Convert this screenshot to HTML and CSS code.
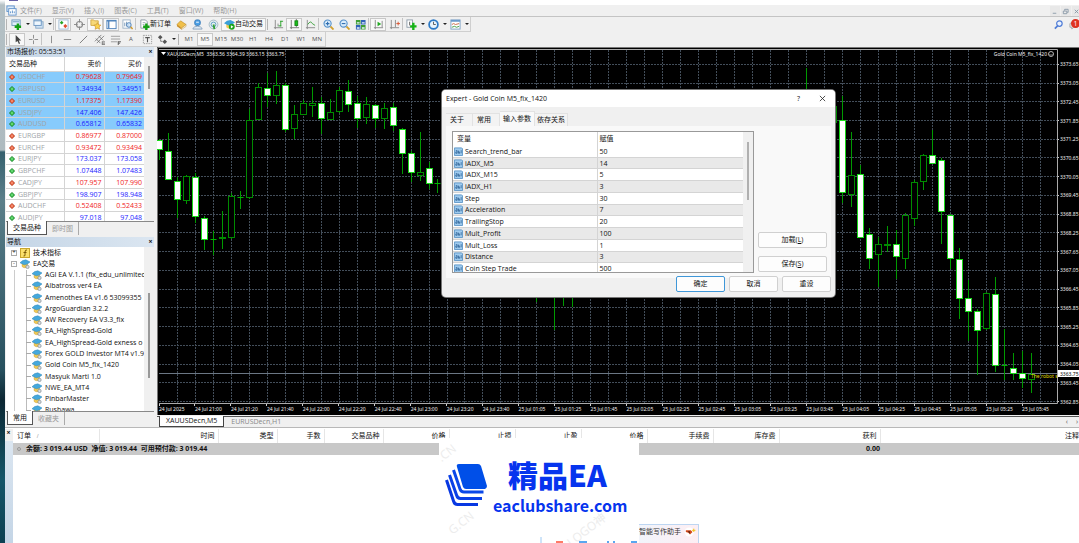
FILE: index.html
```html
<!DOCTYPE html>
<html lang="zh-CN">

<head>
    <meta charset="UTF-8">
    <meta name="viewport" content="width=device-width, initial-scale=1.0">
    <title>XAUUSDecn,M5</title>
    <link rel="stylesheet" href="styles.css">
</head>

<body>
    <!-- Icons -->
    <svg class="sprite" aria-hidden="true">
        <symbol id="i-app" viewBox="0 0 12 12"><rect x="1" y="1" width="8" height="6" fill="#dcebfa" stroke="#5b8fc9"/><rect x="3" y="4" width="8" height="7" fill="#fff" stroke="#5b8fc9"/><path d="M5 9V7M7 9V6M9 9V7" stroke="#5b8fc9"/></symbol>
        <symbol id="i-newchart" viewBox="0 0 12 12"><rect x="1" y="1" width="9" height="6" fill="#e4f0fb" stroke="#6f98bd"/><path d="M2 3h7" stroke="#6f98bd"/><path d="M7.500 5v7M4 8.500h7" stroke="#16a016" stroke-width="2.600"/></symbol>
        <symbol id="i-windows" viewBox="0 0 12 12"><rect x="3" y="3" width="8" height="7" fill="#cfe2f4" stroke="#8aa8c6"/><rect x="1" y="1" width="8" height="6" fill="#eef6fd" stroke="#6c96c2"/><path d="M1 2h8" stroke="#6c96c2"/></symbol>
        <symbol id="i-market" viewBox="0 0 12 12"><rect x="1" y="1" width="10" height="10" fill="#fff" stroke="#9dbad4"/><path d="M4 2l2 2-2 2-2-2z" fill="#27a527"/><path d="M8 5.500l2.200 2.200L8 10 5.800 7.700z" fill="#e04b2c"/></symbol>
        <symbol id="i-target" viewBox="0 0 12 12"><circle cx="6" cy="6" r="3.300" fill="none" stroke="#888" stroke-width="1.200"/><path d="M6 0v4M6 8v4M0 6h4M8 6h4" stroke="#888"/></symbol>
        <symbol id="i-folders" viewBox="0 0 12 12"><path d="M1 1h3l1 1h4v5H1z" fill="#f7d978" stroke="#d3ab4a"/><path d="M8 4l1.200 2.300 2.600.4-1.900 1.900.5 2.600L8 10l-2.400 1.200.5-2.600-1.900-1.900 2.600-.4z" fill="#fbd44e" stroke="#c9902a" stroke-width=".7"/></symbol>
        <symbol id="i-panel" viewBox="0 0 12 12"><rect x="1" y="1.500" width="10" height="9" fill="#fff" stroke="#4c81bb"/><path d="M1 2h10M3 2v8" stroke="#4c81bb" stroke-width="1.400"/></symbol>
        <symbol id="i-tester" viewBox="0 0 12 12"><rect x="1" y="1" width="8" height="9" fill="#fff" stroke="#9db2c6"/><path d="M3 8V4M5 8V3M7 8V5" stroke="#7494b4"/><circle cx="7.500" cy="6.500" r="2.500" fill="#cfe6fa" fill-opacity=".8" stroke="#4c7fb8"/><path d="M9.500 8.500l2 2.500" stroke="#d09a2c" stroke-width="1.500"/></symbol>
        <symbol id="i-order" viewBox="0 0 12 12"><path d="M2 1h5l2 2v7H2z" fill="#fff" stroke="#8d99a5"/><path d="M4 4h3M4 6h2" stroke="#9aa7b4"/><path d="M8 5v7M4.500 8.500h7" stroke="#16a016" stroke-width="2.600"/></symbol>
        <symbol id="i-book" viewBox="0 0 12 12"><path d="M1 6l4-4 6 4-5 4z" fill="#f0c04a" stroke="#c08e2a" stroke-width=".7"/><path d="M1 6l5 4v1.500L1 8z" fill="#c88d24"/><path d="M6 10l5-4v2l-5 3.500z" fill="#fff2c8" stroke="#b98a34" stroke-width=".5"/></symbol>
        <symbol id="i-cloud" viewBox="0 0 12 12"><rect x="3" y="1" width="6" height="6" rx="2" fill="#4ba0e6" stroke="#3478b8"/><path d="M4.500 3.500h3" stroke="#fff"/><path d="M1 11c0-4 10-4 10 0z" fill="#dfe9f3" stroke="#8aa5be"/></symbol>
        <symbol id="i-signal" viewBox="0 0 12 12"><circle cx="6" cy="6" r="4.800" fill="#e6eef2" stroke="#a3b8c3"/><circle cx="6" cy="6" r="2.600" fill="none" stroke="#5b9fc0"/><path d="M6 6l1 5" stroke="#35a035" stroke-width="2"/></symbol>
        <symbol id="i-ea" viewBox="0 0 12 12"><path d="M2.500 5v4c2 2 5 2 6.500 0V5z" fill="#f3ca50" stroke="#bb922e" stroke-width=".5"/><path d="M0 4.500Q3 1 7 1l5 2.500Q9 7 5 7z" fill="#45a8dc" stroke="#2f86ba" stroke-width=".6"/><circle cx="9" cy="9.500" r="2" fill="#d9dde0" stroke="#7b8790" stroke-width=".8"/></symbol>
        <symbol id="i-auto" viewBox="0 0 12 12"><path d="M2.500 5v4c2 2 5 2 6.500 0V5z" fill="#f3ca50"/><path d="M0 4.500Q3 1 7 1l5 2.500Q9 7 5 7z" fill="#3ba0d8"/><circle cx="8.500" cy="8.500" r="3.200" fill="#19a319"/><path d="M7.500 6.700l2.800 1.800-2.800 1.800z" fill="#fff"/></symbol>
        <symbol id="i-bars" viewBox="0 0 12 12"><path d="M2.500 1v10M1 9.500h10M5.500 5v3" stroke="#888"/><path d="M8.500 2v6M8 2.500h3M6 7.500h3" stroke="#23a023"/></symbol>
        <symbol id="i-candles" viewBox="0 0 12 12"><path d="M2.500 1v10M1 9.500h10M8 0v9" stroke="#777"/><rect x="6.500" y="2" width="3" height="5" fill="#19c319" stroke="#128012"/></symbol>
        <symbol id="i-line" viewBox="0 0 12 12"><path d="M2.500 1v10M1 9.500h10" stroke="#888"/><path d="M3 6q3-5 5-1l3 2" fill="none" stroke="#3aa03a"/></symbol>
        <symbol id="i-zoomin" viewBox="0 0 12 12"><path d="M8 8l3.500 3.500" stroke="#d2a02f" stroke-width="2"/><circle cx="5" cy="5" r="3.900" fill="#d9ecfb" stroke="#5590ca" stroke-width="1.200"/><path d="M5 3v4M3 5h4" stroke="#2e6db0" stroke-width="1.200"/></symbol>
        <symbol id="i-zoomout" viewBox="0 0 12 12"><path d="M8 8l3.500 3.500" stroke="#d2a02f" stroke-width="2"/><circle cx="5" cy="5" r="3.900" fill="#d9ecfb" stroke="#5590ca" stroke-width="1.200"/><path d="M3 5h4" stroke="#2e6db0" stroke-width="1.200"/></symbol>
        <symbol id="i-tile" viewBox="0 0 12 12"><path d="M1 1h5v5H1zM6.500 6.500h5v5h-5z" fill="#3e9f35"/><path d="M6.500 1h5v5h-5zM1 6.500h5v5H1z" fill="#2f62b8"/><path d="M2 3.500h3v1.500H2zM7.500 3.500h3v1.500h-3zM2 9h3v1.500H2zM7.500 9h3v1.500h-3z" fill="#eaf3fb"/></symbol>
        <symbol id="i-scroll" viewBox="0 0 12 12"><path d="M2.500 1v10M1 9.500h10M10 2v7" stroke="#888"/><path d="M5 3l4 2.500L5 8z" fill="#22aa22"/></symbol>
        <symbol id="i-shift" viewBox="0 0 12 12"><path d="M2.500 1v10M1 9.500h10M7 1v8" stroke="#888"/><path d="M8 5h4M10 3v4" stroke="#d8502c"/></symbol>
        <symbol id="i-indic" viewBox="0 0 12 12"><rect x="1" y="1" width="6" height="8" fill="#fff" stroke="#8e9ca9"/><path d="M4 3v4" stroke="#555"/><path d="M8 4v8M4.500 8h7" stroke="#17b317" stroke-width="2.600"/></symbol>
        <symbol id="i-clock" viewBox="0 0 12 12"><circle cx="6" cy="6" r="4.800" fill="#e8f3fc" stroke="#2c79c6" stroke-width="1.900"/><path d="M6 3v3h2.500" fill="none" stroke="#555"/></symbol>
        <symbol id="i-templ" viewBox="0 0 12 12"><rect x="1" y="1" width="10" height="10" fill="#fff" stroke="#7ba0c4"/><path d="M1 2h10" stroke="#6a9acb" stroke-width="2"/><path d="M2 6l2-1 2 1 4-1" fill="none" stroke="#c8653e"/><path d="M2 9l3-1 2 1 3-1" fill="none" stroke="#3f9c3f"/></symbol>
        <symbol id="i-cursor" viewBox="0 0 12 12"><path d="M4 1v8l2-1.500L7.500 11l1.300-.6L7.400 7H10z" fill="#444"/></symbol>
        <symbol id="i-cross" viewBox="0 0 12 12"><path d="M6 1v4M6 7v4M1 6h4M7 6h4" stroke="#888"/></symbol>
        <symbol id="i-vline" viewBox="0 0 12 12"><path d="M6 2v8" stroke="#888"/></symbol>
        <symbol id="i-hline" viewBox="0 0 12 12"><path d="M2 6h8" stroke="#888"/></symbol>
        <symbol id="i-trend" viewBox="0 0 12 12"><path d="M2 10l8-8" stroke="#777"/></symbol>
        <symbol id="i-channel" viewBox="0 0 12 12"><path d="M1 8l7-7M3 10l8-8M2 5l5 5M5 2l5 5M9 8.500h3M9 10h3M9 11.500h3M9 8v4" fill="none" stroke="#666" stroke-width=".8"/></symbol>
        <symbol id="i-fibo" viewBox="0 0 12 12"><path d="M1 2.500h10M1 5.500h10M1 8.500h7" stroke="#999"/><path d="M9 8v4M9 8.500h3M9 10h2" stroke="#555"/></symbol>
        <symbol id="i-label" viewBox="0 0 12 12"><rect x="1.500" y="1.500" width="9" height="9" fill="none" stroke="#999" stroke-dasharray="1.500 1"/><path d="M3.500 4h5M6 4v5" stroke="#555" stroke-width="1.200"/></symbol>
        <symbol id="i-arrows" viewBox="0 0 12 12"><path d="M3.500 1l2.500 2.500L3.500 6 1 3.500z" fill="#555"/><path d="M8.500 6l2.500 2.500L8.500 11 6 8.500z" fill="#555"/><path d="M4 6v2h2" fill="none" stroke="#777"/></symbol>
        <symbol id="i-up" viewBox="0 0 8 8"><path d="M4 .5L7.500 4 4 7.500.5 4z" fill="#2fc040" stroke="#1d7a29"/><path d="M4 2.500v3" stroke="#b9f5c0"/></symbol>
        <symbol id="i-down" viewBox="0 0 8 8"><path d="M4 .5L7.500 4 4 7.500.5 4z" fill="#ee5a34" stroke="#a8381e"/><path d="M4 2.500v3" stroke="#ffd0c0"/></symbol>
        <symbol id="i-func" viewBox="0 0 10 10"><rect x=".5" y=".5" width="9" height="9" fill="#fbe06c" stroke="#c9a62c"/><path d="M7 2q-2-.5-2 2v3q0 1.500-1.500 1M3.500 4.500h3" fill="none" stroke="#7a5a08"/></symbol>
        <symbol id="i-param" viewBox="0 0 10 10"><path d="M.5 1h8l1 1v7.500h-9z" fill="#9fcbee" stroke="#5a94c6"/><path d="M2 4h1.500v3H2V5.500h1.500M5 4v3h1.300V5.500H5M8 3.500V7" fill="none" stroke="#2b5f94" stroke-width=".8"/></symbol>
        <symbol id="i-search" viewBox="0 0 12 12"><circle cx="7" cy="5" r="3" fill="#eaf2ff" stroke="#4f7cd6" stroke-width="1.300"/><path d="M5 7.500L2 10.500" stroke="#4f7cd6" stroke-width="1.800"/></symbol>
        <symbol id="i-bell" viewBox="0 0 12 12"><path d="M1 5q5-4 8 0v4H5l-2 2V9H1z" fill="#e4e4e4" stroke="#a8a8a8"/></symbol>
    </svg>

    <div class="desktop"></div>

    <div class="app">
        <div class="titlebar"></div>

        <nav class="menubar">
            <svg class="icon"><use href="#i-app"/></svg>
            <button>文件(F)</button>
            <button>显示(V)</button>
            <button>插入(I)</button>
            <button>图表(C)</button>
            <button>工具(T)</button>
            <button>窗口(W)</button>
            <button>帮助(H)</button>
            <div class="window-buttons">
                <button aria-label="最小化"><svg class="icon-small" viewBox="0 0 8 8"><path d="M2 6h4" stroke="#8797a6"/></svg></button>
                <button aria-label="还原"><svg class="icon-small" viewBox="0 0 8 8"><path d="M3 3V1.500h4V5H6M1.500 3.500h4v3h-4z" fill="none" stroke="#8797a6"/></svg></button>
                <button aria-label="关闭"><svg class="icon-small" viewBox="0 0 8 8"><path d="M2 2l4 4M6 2L2 6" stroke="#8797a6"/></svg></button>
            </div>
        </nav>

        <div class="toolbar">
            <div class="toolbar-group" id="standardTools"></div>
            <div class="toolbar-end">
                <button class="tool" aria-label="搜索"><svg class="icon"><use href="#i-search"/></svg></button>
                <button class="tool messages" aria-label="消息"><svg class="icon"><use href="#i-bell"/></svg><span class="badge">1</span></button>
            </div>
        </div>
        <div class="toolbar">
            <div class="toolbar-group" id="lineTools"></div>
        </div>

        <main class="workspace">
            <aside class="sidebar">
                <!-- Market watch -->
                <section class="panel">
                    <header class="panel-title"><span>市场报价: 05:53:51</span><button aria-label="关闭">×</button></header>
                    <div class="panel-body">
                        <div class="panel-view">
                            <table class="quotes">
                                <thead>
                                    <tr><th>交易品种</th><th>卖价</th><th>买价</th></tr>
                                </thead>
                                <tbody id="quotes"></tbody>
                            </table>
                        </div>
                        <div class="scrollbar"><i class="thumb thumb-quotes"></i></div>
                    </div>
                    <div class="tabs"><button class="tab active">交易品种</button><button class="tab">即时图</button></div>
                </section>

                <!-- Navigator -->
                <section class="panel">
                    <header class="panel-title"><span>导航</span><button aria-label="关闭">×</button></header>
                    <div class="panel-body">
                        <div class="panel-view">
                            <ul class="tree" id="tree">
                                <li class="root"><i class="toggle">+</i><svg class="icon"><use href="#i-func"/></svg>技术指标</li>
                                <li class="root"><i class="toggle">-</i><svg class="icon"><use href="#i-ea"/></svg>EA交易</li>
                            </ul>
                        </div>
                        <div class="scrollbar"><i class="thumb thumb-tree"></i></div>
                    </div>
                    <div class="tabs"><button class="tab active">常用</button><button class="tab">收藏夹</button></div>
                </section>
            </aside>

            <section class="chart-window">
                <svg class="chart" id="chart"></svg>
                <div class="chart-tabs">
                    <button class="chart-tab active">XAUUSDecn,M5</button>
                    <button class="chart-tab">EURUSDecn,H1</button>
                    <div class="chart-arrows"><button aria-label="向左">‹</button><button aria-label="向右">›</button></div>
                </div>
            </section>
        </main>

        <section class="terminal">
            <div class="terminal-side"><button aria-label="关闭">×</button></div>
            <div class="terminal-body">
                <table class="orders">
                    <colgroup>
                        <col class="w-order"><col class="w-time"><col class="w-type"><col class="w-lots"><col class="w-type">
                        <col class="w-price"><col class="w-price"><col class="w-price"><col class="w-price"><col class="w-price"><col class="w-price">
                        <col class="w-profit"><col>
                    </colgroup>
                    <thead>
                        <tr><th>订单 <small>/</small></th><th>时间</th><th>类型</th><th>手数</th><th>交易品种</th><th>价格</th><th>止损</th><th>止盈</th><th>价格</th><th>手续费</th><th>库存费</th><th>获利</th><th>注释</th></tr>
                    </thead>
                    <tbody>
                        <tr>
                            <td colspan="11"><i class="dot"></i>余额: 3 019.44 USD&nbsp; 净值: 3 019.44&nbsp; 可用预付款: 3 019.44</td>
                            <td class="profit">0.00</td>
                            <td></td>
                        </tr>
                    </tbody>
                </table>
            </div>
        </section>
    </div>

    <!-- Expert properties -->
    <div class="dialog" role="dialog" aria-label="Expert - Gold Coin M5_fix_1420">
        <header class="dialog-title">
            <span>Expert - Gold Coin M5_fix_1420</span>
            <button aria-label="帮助">?</button>
            <button aria-label="关闭"><svg class="icon-small" viewBox="0 0 8 8"><path d="M1 1l6 6M7 1L1 7" stroke="#222" stroke-width=".9"/></svg></button>
        </header>
        <div class="dialog-tabs">
            <button>关于</button>
            <button>常用</button>
            <button class="active">输入参数</button>
            <button>依存关系</button>
        </div>
        <div class="dialog-panel">
            <div class="params-box">
                <div class="params-view">
                    <table class="params">
                        <thead>
                            <tr><th>变量</th><th>赋值</th></tr>
                        </thead>
                        <tbody id="params"></tbody>
                    </table>
                </div>
                <div class="scrollbar"><i class="thumb thumb-params"></i></div>
            </div>
            <div class="dialog-side">
                <button class="button">加载(<u>L</u>)</button>
                <button class="button">保存(<u>S</u>)</button>
            </div>
        </div>
        <footer class="dialog-footer">
            <button class="button primary">确定</button>
            <button class="button">取消</button>
            <button class="button">重设</button>
        </footer>
    </div>

    <!-- Writing assistant popup -->
    <div class="assistant">
        <span>智能写作助手</span>
        <svg class="assistant-icon" viewBox="0 0 14 12"><circle cx="6" cy="6" r="5.500" fill="#fff"/><path d="M2 4h6l2 2-3 3-2-2-3-1z" fill="#d2491c"/><path d="M4 5h3v3z" fill="#5c2412"/><path d="M11.500 2v4M9.500 4h4" stroke="#f3c21c" stroke-width="1.200"/></svg>
    </div>

    <!-- Site logo -->
    <div class="logo">
        <span class="watermark watermark-top">.CN</span>
        <span class="watermark watermark-mid">LOGO神</span>
        <span class="watermark watermark-left">G.CN</span>
        <svg class="logo-mark" viewBox="0 0 42 44">
            <path d="M14 1h19q2 0 3 2l6 20q0 2-2 3H21q-2 0-3-2L12 4q-1-3 2-3z" fill="#004fe8"/>
            <path d="M8.500 7l6.500 19q1 3 4 3h19.500" fill="none" stroke="#0a48e8" stroke-width="3"/>
            <path d="M4.500 12l7 20q1 3.500 4 3.500H37" fill="none" stroke="#0a40e6" stroke-width="3"/>
            <path d="M1.500 17l7 21q1 3.500 4 3.500H33" fill="none" stroke="#0838e2" stroke-width="3"/>
        </svg>
        <div class="logo-text">
            <strong>精品EA</strong>
            <span>eaclubshare.com</span>
        </div>
        <svg class="logo-strip" viewBox="0 0 99 6"><path d="M1 0v6" stroke="#9cc8f2"/><path d="M16 5h7" stroke="#ff7a66" stroke-width="2"/><path d="M39 5h8M67 5h2M73 5h2M91 5h6" stroke="#5aa6ef" stroke-width="2"/></svg>
    </div>

    <script src="script.js"></script>
</body>

</html>
```
FILE: styles.css
```css
* {
    box-sizing: border-box;
}

body {
    display: flex;
    position: relative;
    margin: 0;
    min-height: 100vh;
    overflow: hidden;
    font-family: "Open Sans", "Noto Sans CJK SC", sans-serif;
    font-size: 7px;
    line-height: 10px;
    color: #111;
    background: #f0f0f0;
}

button {
    margin: 0;
    padding: 0;
    border: 0;
    font: inherit;
    color: inherit;
    background: none;
}

table {
    border-collapse: collapse;
    table-layout: fixed;
    width: 100%;
}

th,
td {
    padding: 0;
    font-weight: normal;
    text-align: left;
    white-space: nowrap;
}

.sprite {
    position: absolute;
    width: 0;
    height: 0;
}

.icon {
    flex: none;
    width: 11px;
    height: 11px;
}

.icon-small {
    display: block;
    width: 7px;
    height: 7px;
}

.desktop {
    flex: none;
    width: 5px;
    background: linear-gradient(#fff 0, #b4c0c5 5px, #aebbc0 150px, #35606e 152px, #5b7f8a 200px, #27505e 370px, #0c2733 400px, #14566a 480px, #0d4052);
}

.app {
    display: flex;
    flex-direction: column;
    flex: 1;
    min-width: 0;
}

.titlebar {
    height: 5px;
    background: linear-gradient(#6a62a8, #6a62a8) 4px 0 / 9px 1px no-repeat #fff;
}

/* Menu */
.menubar {
    display: flex;
    align-items: center;
    gap: 10px;
    height: 12px;
    padding-left: 1px;
    border-bottom: 1px solid #c4c4c4;
    color: #999;
}

.menubar .icon {
    margin-right: -7px;
}

.window-buttons {
    display: flex;
    gap: 1px;
    margin: 0 -3px 0 auto;
}

.window-buttons button {
    padding: 2px 1px 1px;
    width: 10px;
    background: #e8e8e8;
}

/* Toolbars */
.toolbar {
    display: flex;
    justify-content: space-between;
    height: 15px;
}

.toolbar-group,
.toolbar-end {
    display: flex;
    align-items: center;
    border: solid #cfcfcf;
    border-width: 0 1px 1px 0;
}

.toolbar-end {
    border: 0;
    margin-right: -3px;
}

.grip {
    width: 2px;
    height: 11px;
    margin: 0 1px;
    border-left: 1px solid #b4b4b4;
}

.sep {
    width: 2px;
    height: 12px;
    border-left: 1px solid #c4c4c4;
}

.tool {
    display: flex;
    align-items: center;
    justify-content: center;
    width: 16px;
    height: 13px;
    font-size: 6px;
    color: #555;
}

.tool.drop {
    width: 22px;
    gap: 4px;
}

.tool.drop::after {
    content: "";
    border: 2px solid transparent;
    border-top-color: #222;
    border-bottom: 0;
}

.tool.wide {
    width: auto;
    padding: 0 2px;
    font-size: 7px;
    color: #111;
}

.tool.pressed {
    border: 1px solid #c8c8c8;
    background: #f8f8f8;
}

.messages {
    position: relative;
}

.badge {
    position: absolute;
    top: 1px;
    right: 2px;
    width: 9px;
    height: 9px;
    border-radius: 50%;
    font-size: 7px;
    line-height: 9px;
    text-align: center;
    color: #fff;
    background: #df3220;
}

/* Workspace */
.workspace {
    display: grid;
    grid-template-columns: 152px 1fr;
    height: 381px;
    border-bottom: 1px solid #b8b8b8;
}

.sidebar {
    display: flex;
    flex-direction: column;
    padding: 0 3px 0 1px;
}

.panel {
    height: 190px;
}

.panel-title {
    display: flex;
    justify-content: space-between;
    height: 10px;
    padding: 0 1px;
    background: linear-gradient(90deg, #c4d5e6, #dbe6f1);
}

.panel-title button {
    width: 5px;
    font-weight: bold;
}

.panel-body {
    display: flex;
    height: 164px;
    background: #fff;
}

.panel-view {
    flex: 1;
    min-width: 0;
    overflow: hidden;
}

.scrollbar {
    width: 10px;
    background: #f0f0f0;
}

.thumb {
    display: block;
    width: 2px;
    margin: 0 auto;
    background: #999;
}

.thumb-quotes {
    height: 23px;
    margin-top: 9px;
}

.thumb-tree {
    height: 85px;
    margin-top: 46px;
}

.thumb-params {
    height: 58px;
    margin-top: 10px;
    background: #b0b0b0;
}

.quotes {
    height: 167px;
}

.quotes thead tr {
    height: 14px;
}

.quotes th + th,
.quotes td + td {
    width: 40px;
    padding-right: 2px;
    text-align: right;
    border-left: 1px solid #d4d4d4;
}

.quotes th:first-child {
    padding-left: 3px;
}

.quotes tr {
    border-bottom: 1px solid #d4d4d4;
}

.quotes td {
    line-height: 9px;
    color: #1c1cff;
}

.quotes .down td {
    color: #f01c1c;
}

.quotes .selected {
    background: #87cbfc;
}

.quotes td:first-child,
.quotes .down td:first-child {
    color: #a0a4a8;
}

.quotes svg {
    width: 6px;
    height: 6px;
    margin: 0 3px -1px;
}

.tabs {
    display: flex;
    height: 14px;
    border-top: 1px solid #888;
}

.tab {
    padding: 0 5px;
    height: 13px;
    color: #999;
    border-right: 1px solid #aaa;
}

.tab.active {
    margin: -1px 0 0 1px;
    height: 14px;
    color: #111;
    border: 1px solid #555;
    border-top: 0;
    background: #fff;
}

.tree {
    display: grid;
    grid-auto-rows: 1fr;
    height: 169px;
    margin: 0;
    padding: 0;
    list-style: none;
}

.tree li {
    display: flex;
    align-items: center;
    gap: 3px;
    padding-left: 26px;
    white-space: nowrap;
    background: linear-gradient(#aaa, #aaa) 20px 5px / 5px 1px no-repeat, linear-gradient(#bbb, #bbb) 20px 0 / 1px 100% no-repeat, linear-gradient(#ccc, #ccc) 8px 0 / 1px 100% no-repeat;
}

.tree .root {
    padding-left: 5px;
    background: none;
}

.tree .toggle {
    width: 6px;
    height: 6px;
    border: 1px solid #aaa;
    font-size: 6px;
    font-style: normal;
    line-height: 3px;
    text-align: center;
}

.tree .icon {
    width: 10px;
    height: 10px;
}

/* Chart */
.chart-window {
    display: flex;
    flex-direction: column;
    min-width: 0;
}

.chart {
    display: block;
    width: 100%;
    height: 368px;
    background: #000;
}

.chart text {
    font-family: "Noto Sans", sans-serif;
    font-size: 5px;
    fill: #f0f0f0;
}

.chart .grid {
    stroke: #434e5a;
    stroke-dasharray: 2 1;
}

.chart .robot {
    fill: #e0d800;
}

.chart .price {
    fill: #000;
}

.chart-tabs {
    display: flex;
    flex: 1;
    margin-top: 1px;
    padding-left: 2px;
    border-top: 1px solid #555;
}

.chart-tab {
    padding: 0 7px;
    color: #888;
}

.chart-tab.active {
    margin-top: -1px;
    padding: 0 6px;
    color: #111;
    border: 1px solid #444;
    border-top: 0;
    background: #fff;
}

.chart-arrows {
    display: flex;
    gap: 8px;
    margin-left: auto;
    padding-right: 1px;
    color: #555;
}

/* Terminal */
.terminal {
    display: flex;
    flex: 1;
    border-top: 1px solid #fff;
}

.terminal-side {
    width: 8px;
    font-weight: bold;
    line-height: 7px;
    background: linear-gradient(#f0f0f0 12px, #dbe6f1 12px, #c4d5e6);
}

.terminal-side button {
    display: block;
    width: 7px;
}

.terminal-body {
    flex: 1;
    min-width: 0;
    background: #fff;
}

.orders thead tr {
    height: 14px;
}

.orders th {
    padding-right: 3px;
    text-align: right;
    border-right: 1px solid #e6e6e6;
}

.orders th:first-child {
    padding-left: 4px;
    text-align: left;
}

.orders th:last-child {
    padding-right: 0;
    border-right: 0;
}

.orders small {
    padding-left: 4px;
    font-size: 5px;
    color: #888;
}

.orders tbody tr {
    height: 12px;
    background: #c8c8c8;
}

.orders td {
    font-weight: bold;
}

.orders .profit {
    text-align: right;
}

.orders .dot {
    display: inline-block;
    width: 4px;
    height: 4px;
    margin: 0 5px 0 4px;
    border: 1px solid #999;
    border-radius: 50%;
}

.w-order { width: 86px; }
.w-time { width: 119px; }
.w-type { width: 59px; }
.w-lots { width: 47px; }
.w-price { width: 66px; }
.w-profit { width: 101px; }

/* Dialog */
.dialog {
    position: absolute;
    top: 90px;
    left: 442px;
    width: 393px;
    border-radius: 4px;
    overflow: hidden;
    background: #f0f0f0;
    box-shadow: 0 0 0 1px #777;
}

.dialog-title {
    display: flex;
    align-items: center;
    gap: 19px;
    height: 17px;
    padding: 0 9px 0 4px;
    background: #fff;
}

.dialog-title span {
    flex: 1;
}

.dialog-tabs {
    display: flex;
    align-items: flex-end;
    height: 19px;
    padding-left: 4px;
}

.dialog-tabs button {
    height: 13px;
    padding: 0 2px 0 4px;
    min-width: 27px;
    text-align: left;
    border: solid #e2e2e2;
    border-width: 1px 1px 0 0;
    background: #f3f3f3;
}

.dialog-tabs .active {
    height: 15px;
    padding: 0 3px;
    background: #f9f9f9;
}

.dialog-tabs .active + button {
    padding: 0 2px;
}

.dialog-panel {
    display: flex;
    gap: 4px;
    margin: 0 4px;
    padding: 5px 4px 5px 6px;
    background: #f9f9f9;
}

.params-box {
    display: flex;
    flex: 1;
    height: 142px;
    border: 1px solid #999;
    background: #fff;
}

.params-view {
    flex: 1;
    overflow: hidden;
}

.params {
    height: 142px;
}

.params thead tr {
    height: 14px;
}

.params td {
    line-height: 9px;
}

.params th:first-child {
    width: 144px;
    padding-left: 4px;
}

.params th + th,
.params td + td {
    padding-left: 2px;
    border-left: 1px solid #d4d4d4;
}

.params tbody tr:nth-child(even) {
    background: #e9e9e9;
    border: solid #d4d4d4;
    border-width: 1px 0;
}

.params svg {
    width: 9px;
    height: 9px;
    margin: 0 2px -2px 1px;
}

.dialog-side {
    display: flex;
    flex-direction: column;
    justify-content: flex-end;
    gap: 8px;
    width: 69px;
    padding-bottom: 1px;
}

.button {
    height: 16px;
    border: 1px solid #d0d0d0;
    border-radius: 2px;
    background: #fdfdfd;
}

.button.primary {
    border-color: #3f97d8;
}

.dialog-footer {
    position: relative;
    display: flex;
    justify-content: flex-end;
    gap: 4px;
    margin-top: -2px;
    padding: 0 4px 5px;
}

.dialog-footer .button {
    width: 49px;
}

/* Overlays */
.logo {
    position: absolute;
    top: 438px;
    left: 439px;
    display: flex;
    gap: 6px;
    width: 200px;
    height: 105px;
    padding: 16px 6px 0;
    overflow: hidden;
    background: #fff;
}

.logo-mark {
    position: relative;
    width: 42px;
    height: 44px;
    margin-top: 9px;
}

.logo-text {
    position: relative;
    display: flex;
    flex-direction: column;
    font-family: "Noto Sans CJK SC", sans-serif;
    font-weight: bold;
    color: #0634ee;
}

.logo-text strong {
    padding-left: 15px;
    font-size: 30px;
    line-height: 40px;
}

.logo-text span {
    font-size: 16px;
    line-height: 22px;
}

.logo-strip {
    position: absolute;
    left: 101px;
    bottom: 0;
    width: 99px;
    height: 6px;
}

.watermark {
    position: absolute;
    font-size: 12px;
    line-height: 14px;
    white-space: nowrap;
    color: #ececec;
    transform: rotate(-38deg);
}

.watermark-top {
    top: 8px;
    left: -2px;
}

.watermark-mid {
    top: 85px;
    left: 125px;
}

.watermark-left {
    top: 78px;
    left: 8px;
}

.assistant {
    position: absolute;
    top: 524px;
    left: 620px;
    display: flex;
    align-items: center;
    justify-content: flex-end;
    gap: 3px;
    width: 79px;
    height: 24px;
    padding: 0 2px 8px 0;
    border: 1px solid #bdd6f2;
    color: #333;
    background: linear-gradient(90deg, #eef6fd, #fdeef3);
}

.assistant-icon {
    width: 12px;
    height: 10px;
}
```
FILE: script.js
```javascript
// [icon, state, label]
const standardTools = [
    ['grip'], ['newchart', 'drop'], ['windows', 'drop'], ['sep'],
    ['market', 'pressed'], ['target'], ['folders', 'pressed'], ['panel', 'pressed'], ['tester'], ['sep'],
    ['order', 'wide', '新订单'], ['book'], ['cloud'], ['signal'], ['auto', 'wide pressed', '自动交易'], ['grip'],
    ['bars'], ['candles', 'pressed'], ['line'], ['sep'],
    ['zoomin'], ['zoomout'], ['tile'], ['sep'], ['scroll', 'pressed'], ['shift'], ['sep'],
    ['indic', 'drop'], ['clock', 'drop'], ['templ', 'drop'],
];

const lineTools = [
    ['grip'], ['cursor', 'pressed'], ['cross'], ['sep'],
    ['vline'], ['hline'], ['trend'], ['channel'], ['fibo'], ['', '', 'A'], ['label'], ['arrows', 'drop'], ['grip'],
    ['', '', 'M1'], ['', 'pressed', 'M5'], ['', '', 'M15'], ['', '', 'M30'], ['', '', 'H1'],
    ['', '', 'H4'], ['', '', 'D1'], ['', '', 'W1'], ['', '', 'MN'],
];

function renderTools(id, tools) {
    document.getElementById(id).innerHTML = tools.map(([icon, state = '', label = '']) => {
        if (icon === 'grip' || icon === 'sep') {
            return `<i class="${icon}"></i>`;
        }
        const svg = icon ? `<svg class="icon"><use href="#i-${icon}"/></svg>` : '';
        return `<button class="tool ${state}" aria-label="${label || icon}">${svg}${label}</button>`;
    }).join('');
}

renderTools('standardTools', standardTools);
renderTools('lineTools', lineTools);

// Quotes
const quotes = [
    ['USDCHF', '0.79628', '0.79649', 'down'],
    ['GBPUSD', '1.34934', '1.34951', 'up'],
    ['EURUSD', '1.17375', '1.17390', 'down'],
    ['USDJPY', '147.406', '147.426', 'up'],
    ['AUDUSD', '0.65812', '0.65832', 'up'],
    ['EURGBP', '0.86977', '0.87000', 'down'],
    ['EURCHF', '0.93472', '0.93494', 'down'],
    ['EURJPY', '173.037', '173.058', 'up'],
    ['GBPCHF', '1.07448', '1.07483', 'up'],
    ['CADJPY', '107.957', '107.990', 'down'],
    ['GBPJPY', '198.907', '198.948', 'up'],
    ['AUDCHF', '0.52408', '0.52433', 'down'],
    ['AUDJPY', '97.018', '97.048', 'up'],
];

document.getElementById('quotes').innerHTML = quotes.map(([name, bid, ask, dir], i) =>
    `<tr class="${dir} ${i < 5 ? 'selected' : ''}"><td><svg><use href="#i-${dir}"/></svg>${name}</td><td>${bid}</td><td>${ask}</td></tr>`
).join('');

// Navigator
const experts = [
    'AGI EA V.1.1 (fix_edu_unlimited', 'Albatross ver4 EA', 'Amenothes EA v1.6 53099355', 'ArgoGuardian 3.2.2',
    'AW Recovery EA V3.3_fix', 'EA_HighSpread-Gold', 'EA_HighSpread-Gold exness o', 'Forex GOLD Investor MT4 v1.9',
    'Gold Coin M5_fix_1420', 'Masyuk Marti 1.0', 'NWE_EA_MT4', 'PinbarMaster', 'Rushawa',
];

document.getElementById('tree').insertAdjacentHTML('beforeend', experts.map(name =>
    `<li><svg class="icon"><use href="#i-ea"/></svg>${name}</li>`
).join(''));

// Expert inputs
const params = [
    ['Search_trend_bar', 50], ['iADX_M5', 14], ['iADX_M15', 5], ['iADX_H1', 3], ['Step', 30], ['Acceleration', 7],
    ['TrailingStop', 20], ['Mult_Profit', 100], ['Mult_Loss', 1], ['Distance', 3], ['Coin Step Trade', 500],
];

document.getElementById('params').innerHTML = params.map(([name, value]) =>
    `<tr><td><svg><use href="#i-param"/></svg>${name}</td><td>${value}</td></tr>`
).join('');

// Candles: [bar, high, top, bottom, low, 1 = filled]
const candles = [
    [0, 91, 92, 102, 112, 1], [1, 85, 103, 132, 132, 1], [2, 129, 133, 152, 170, 1], [3, 127, 128, 153, 156, 0],
    [4, 125, 129, 169, 175, 1], [5, 168, 170, 192, 202, 1], [6, 183, 191, 191, 207, 0], [7, 163, 189, 190, 201, 0],
    [8, 145, 148, 190, 191, 0], [9, 143, 149, 149, 161, 0], [10, 61, 72, 150, 151, 0], [11, 35, 39, 72, 72, 0],
    [12, 25, 40, 48, 59, 1], [13, 23, 37, 48, 56, 0], [14, 35, 37, 82, 84, 1], [15, 57, 66, 81, 91, 0],
    [16, 52, 55, 67, 67, 0], [17, 39, 55, 58, 69, 0], [18, 49, 55, 71, 86, 1], [19, 51, 64, 72, 72, 0],
    [20, 39, 42, 64, 65, 0], [21, 32, 43, 57, 64, 1], [22, 48, 55, 71, 80, 1], [23, 49, 56, 70, 76, 0],
    [24, 56, 57, 71, 80, 1], [25, 55, 60, 71, 81, 0], [26, 55, 59, 78, 83, 1], [27, 80, 81, 106, 126, 1],
    [28, 103, 105, 125, 134, 1], [29, 84, 124, 128, 133, 0], [30, 114, 120, 136, 141, 1], [31, 131, 135, 135, 145, 0],
    [42, 220, 230, 240, 254, 0], [44, 220, 230, 240, 282, 0], [45, 220, 230, 240, 258, 0], [46, 220, 230, 240, 259, 0],
    [72, 20, 60, 80, 90, 0], [75, 57, 58, 75, 76, 0], [76, 48, 72, 145, 155, 1], [77, 84, 127, 147, 159, 0],
    [78, 117, 126, 190, 190, 1], [79, 180, 186, 211, 221, 1], [80, 189, 196, 207, 239, 0], [81, 178, 196, 197, 204, 0],
    [82, 182, 196, 209, 231, 1], [83, 165, 167, 211, 221, 0], [84, 132, 134, 171, 178, 0], [85, 106, 107, 134, 142, 0],
    [86, 82, 107, 116, 116, 1], [87, 110, 112, 164, 196, 1], [88, 166, 167, 211, 221, 1], [89, 200, 211, 251, 271, 1],
    [90, 232, 250, 264, 293, 1], [91, 261, 263, 283, 327, 1], [92, 244, 245, 281, 282, 0], [93, 229, 246, 318, 324, 1],
    [94, 281, 317, 317, 332, 0], [95, 305, 320, 326, 332, 1], [96, 303, 325, 331, 340, 1], [97, 305, 326, 332, 345, 0],
];

const barStep = 8.99;
const rowStep = 18.74;
const snap = v => Math.floor(v) + 0.5;

function timeLabel(i) {
    if (i === 0) {
        return '24 Jul 2025';
    }
    const day = i < 10 ? 24 : 25;
    const minutes = i < 10 ? 1260 + (i - 1) * 20 : 65 + (i - 10) * 20;
    const hh = String(Math.floor(minutes / 60)).padStart(2, '0');
    const mm = String(minutes % 60).padStart(2, '0');
    return `${day} Jul ${hh}:${mm}`;
}

function drawChart() {
    const chart = document.getElementById('chart');
    const right = chart.clientWidth - 24;
    const bottom = 355;
    let out = '';

    // Grid
    for (let x = 18.3; x < right; x += barStep * 2) {
        out += `<path class="grid" d="M${snap(x)} 2V${bottom}"/>`;
    }
    for (let i = 0; i < 19; i++) {
        const y = 16.3 + i * rowStep;
        out += `<path class="grid" d="M0 ${snap(y)}H${right}"/>`;
        out += `<path d="M${right} ${snap(y)}h2" stroke="#ccc"/>`;
        out += `<text x="${right + 3}" y="${y + 2}">${(3373.65 - i * 0.6).toFixed(2)}</text>`;
    }
    for (let i = 0; i < 25; i++) {
        const x = i * barStep * 4;
        out += `<path d="M${snap(x)} ${bottom}v3" stroke="#ccc"/>`;
        out += `<text x="${x}" y="363">${timeLabel(i)}</text>`;
    }

    // Price line
    out += `<path d="M0 325.500H${right}" stroke="#6b7784"/>`;

    // Bars
    candles.forEach(([bar, high, top, low, end, filled]) => {
        const x = snap(bar * barStep + 0.3);
        out += `<path d="M${x} ${high}V${end}" stroke="#009a00"/>`;
        if (top === low) {
            out += `<path d="M${x - 3} ${top + 0.5}h6" stroke="#00b400"/>`;
        } else {
            out += `<rect x="${x - 3}" y="${top + 0.5}" width="6" height="${Math.max(low - top - 1, 1)}" fill="${filled ? '#fff' : '#000'}" stroke="${filled ? '#19d819' : '#008a00'}"/>`;
        }
    });

    // Frame and captions
    out += `<path d="M0 1.500H${right + 0.5}V${bottom + 0.5}H0" fill="none" stroke="#aaa"/>`;
    out += '<path d="M2 4h5l-2.500 3z" fill="#fff"/>';
    out += '<text x="8" y="8">XAUUSDecn,M5&#160; 3363.56 3364.39 3363.15 3363.75</text>';
    out += `<text x="${right - 10}" y="8" text-anchor="end">Gold Coin M5_fix_1420</text>`;
    out += `<circle cx="${right - 6}" cy="6" r="2.500" fill="none" stroke="#ddd" stroke-width=".8"/><path d="M${right - 7.5} 6.500q1.500 1.500 3 0" fill="none" stroke="#ddd" stroke-width=".6"/>`;
    out += `<text class="robot" x="${right - 26}" y="330">The robot s</text>`;
    out += `<rect x="${right + 1}" y="322" width="30" height="7" fill="#fff"/>`;
    out += `<text class="price" x="${right + 3}" y="327.500">3363.75</text>`;

    chart.innerHTML = `<path d="M.5 400V.5H4000" fill="none" stroke="#777"/><g transform="translate(2 1)">${out}</g>`;
}

drawChart();
window.addEventListener('resize', drawChart);
```
